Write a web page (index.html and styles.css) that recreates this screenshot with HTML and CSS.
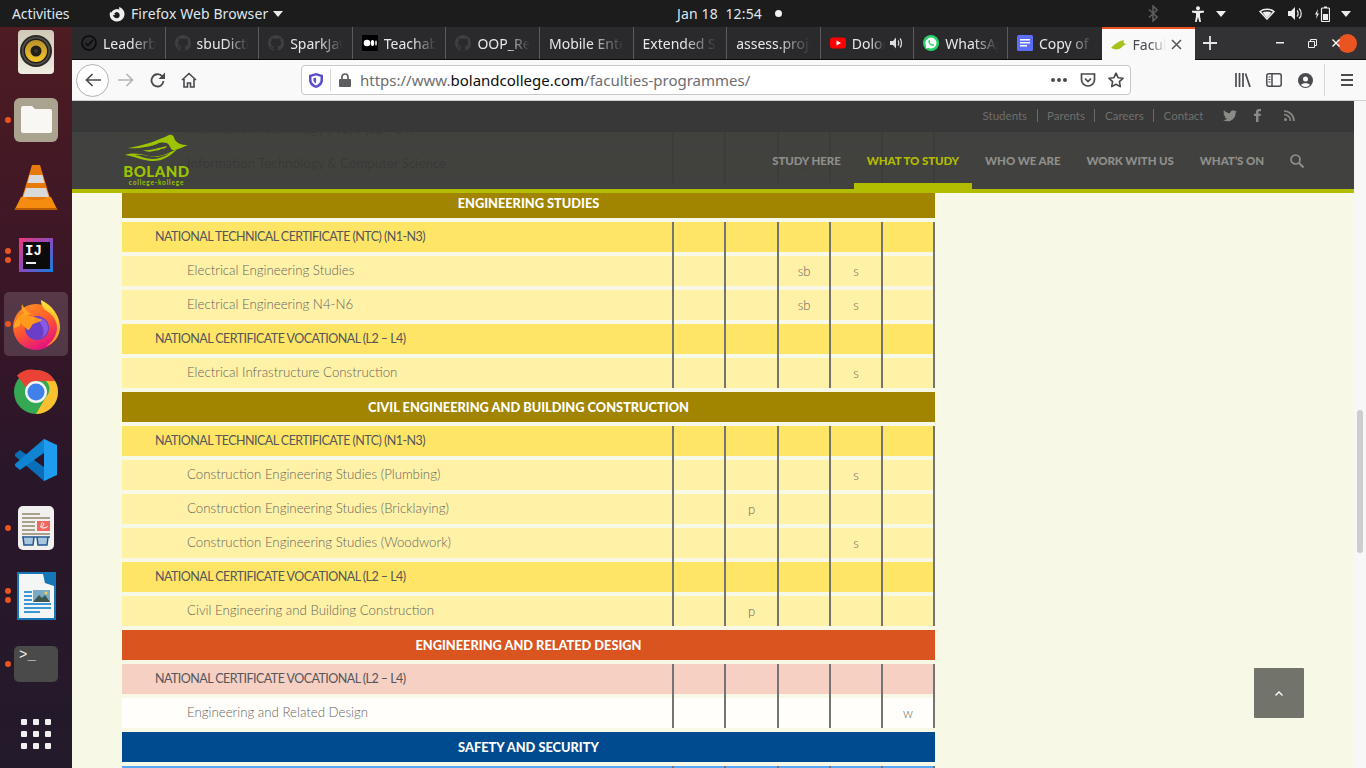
FILE: index.html
```html
<!DOCTYPE html>
<html lang="en">
<head>
<meta charset="utf-8">
<title>Faculties Programmes</title>
<link rel="stylesheet" href="styles.css">
</head>
<body>
<svg class="sprite" width="0" height="0"><defs>
<symbol id="gh" viewBox="0 0 16 16"><path fill="#3f3f42" d="M8 0C3.58 0 0 3.58 0 8c0 3.54 2.29 6.53 5.47 7.59.4.07.55-.17.55-.38 0-.19-.01-.82-.01-1.49-2.01.37-2.53-.49-2.69-.94-.09-.23-.48-.94-.82-1.13-.28-.15-.68-.52-.01-.53.63-.01 1.08.58 1.23.82.72 1.21 1.87.87 2.33.66.07-.52.28-.87.51-1.07-1.78-.2-3.64-.89-3.64-3.95 0-.87.31-1.59.82-2.15-.08-.2-.36-1.02.08-2.12 0 0 .67-.21 2.2.82.64-.18 1.32-.27 2-.27.68 0 1.36.09 2 .27 1.53-1.04 2.2-.82 2.2-.82.44 1.1.16 1.92.08 2.12.51.56.82 1.27.82 2.15 0 3.07-1.87 3.75-3.65 3.95.29.25.54.73.54 1.48 0 1.07-.01 1.93-.01 2.2 0 .21.15.46.55.38A8.013 8.013 0 0016 8c0-4.42-3.58-8-8-8z"/></symbol>
<symbol id="caret" viewBox="0 0 10 6"><path fill="currentColor" d="M0 0h10L5 6z"/></symbol>
</defs></svg>

<header class="topbar">
  <span class="tb-activities">Activities</span>
  <span class="tb-app">
    <svg width="16" height="16" viewBox="0 0 16 16"><path fill="#eee" d="M10.500 1C9.800 2.300 10 3 10.800 3.600 9.900 3.200 8.900 3 8 3 5 3.300 3 5 2.600 6.200 1.900 7 1.600 6 1.800 5.200.9 6.600.6 8 .8 9.500 1.300 13 4.300 15.500 8 15.500c4.100 0 7.500-3.300 7.500-7.500 0-3-1.800-5.600-5-7zM8 12.300C5.800 12.300 4.200 10.800 4 8.800c1 .5 1.600.3 2.300-.3-.7-.3-1.100-.8-1-1.300.8-.2 1.500-.6 2-1.100 1.800-.1 3.400 1.400 3.400 3.200 0 1.700-1.300 3-2.700 3z"/></svg>
    <span class="tb-appname">Firefox Web Browser</span>
    <svg class="tb-caret" width="10" height="6"><use href="#caret"/></svg>
  </span>
  <span class="tb-clock">Jan 18&nbsp; 12:54</span>
  <span class="tb-dot"></span>
  <span class="tb-status">
    <svg class="st-bt" width="10" height="17" viewBox="0 0 10 17"><path fill="none" stroke="#5c5c5c" stroke-width="1.600" d="M1 4.500l8 7.500-4 4V1l4 4-8 7.500"/></svg>
    <svg class="st-acc" width="14" height="16" viewBox="0 0 14 16"><circle cx="7" cy="2.200" r="2" fill="#eee"/><path fill="#eee" d="M1 4.800h12v1.600L9 7.200V10l1 6H8.300L7 11l-1.300 5H4l1-6V7.200L1 6.400z"/></svg>
    <svg class="st-caret1" width="10" height="6"><use href="#caret"/></svg>
    <svg class="st-wifi" width="16" height="12" viewBox="0 0 16 12"><path fill="none" stroke="#eee" stroke-width="1.500" d="M1 3.500C5 .5 11 .5 15 3.500L8 11z"/><path fill="#eee" d="M3.500 4.500c2.500-1.500 6.500-1.500 9 0L8 10z"/></svg>
    <svg class="st-vol" width="16" height="15" viewBox="0 0 16 15"><path fill="#eee" d="M0 5h3l4-4v13l-4-4H0z"/><path fill="none" stroke="#eee" stroke-width="1.200" d="M9 4.500c1.500 1.500 1.500 4.500 0 6M11 2.500c3 2.500 3 7.500 0 10"/></svg>
    <svg class="st-bat" width="15" height="16" viewBox="0 0 15 16"><path fill="#eee" d="M3 3L0 8.500h1.800L1 13l3-5.500H2.200z"/><rect x="6.500" y="2" width="8" height="13.500" rx="1" fill="none" stroke="#eee" stroke-width="1.200"/><rect x="9" y=".5" width="3" height="1.500" fill="#eee"/><rect x="8" y="8" width="5" height="6" fill="#eee"/></svg>
    <svg class="st-caret2" width="10" height="6"><use href="#caret"/></svg>
  </span>
</header>

<div class="desktop">
  <nav class="dock">
    <div class="dock-list">
      <div class="dock-item">
        <svg width="64" height="64" viewBox="0 0 64 64"><defs><linearGradient id="rb" x1="0" y1="0" x2="0" y2="1"><stop offset="0" stop-color="#cfc9b6"/><stop offset="1" stop-color="#f0ede2"/></linearGradient><linearGradient id="rbs" x1="0" y1="0" x2="0" y2="1"><stop offset="0" stop-color="#b8902a"/><stop offset="1" stop-color="#f4c62a"/></linearGradient></defs><rect x="14" y="10" width="36" height="44" rx="4" fill="url(#rb)"/><circle cx="32" cy="31" r="16" fill="#2b2a28"/><circle cx="32" cy="31" r="14" fill="#54524c"/><circle cx="32" cy="31" r="12.500" fill="#201e1a"/><circle cx="32" cy="31" r="11" fill="url(#rbs)"/><circle cx="32" cy="31" r="5.500" fill="#221f18"/><circle cx="32" cy="31" r="2" fill="#3a372e"/></svg>
      </div>
      <div class="dock-item">
        <span class="pip pip-one"></span>
        <svg width="64" height="64" viewBox="0 0 64 64"><rect x="10" y="10" width="44" height="44" rx="6" fill="#aaa38f"/><path fill="#f8f7f4" d="M17 20a2 2 0 012-2h9l3 3h15a2 2 0 012 2v20a2 2 0 01-2 2H19a2 2 0 01-2-2z"/></svg>
      </div>
      <div class="dock-item">
        <svg width="64" height="64" viewBox="0 0 64 64"><path fill="#e87a0c" d="M28 9h8l11 36H17z"/><path fill="#d9d9d9" d="M25.500 19h13l2 8h-17zM22 32h20l3 9H19z"/><path fill="#f58b0f" d="M17 41h5c-1 4 21 4 20 0h5l6 12H11z"/><path fill="#b95c05" d="M11 52h42l.5 2h-43z"/></svg>
      </div>
      <div class="dock-item">
        <span class="pip pip-two-a"></span><span class="pip pip-two-b"></span>
        <svg width="64" height="64" viewBox="0 0 64 64"><defs><linearGradient id="ij" x1="0" y1="0" x2="1" y2="1"><stop offset="0" stop-color="#f0397c"/><stop offset=".5" stop-color="#8b4bbd"/><stop offset="1" stop-color="#0f7ee0"/></linearGradient></defs><rect x="15" y="14" width="34" height="34" fill="url(#ij)"/><rect x="19" y="18" width="27" height="27" fill="#0b0b0b"/><text x="21" y="31" class="ij-text">IJ</text><rect x="22" y="38" width="10" height="2" fill="#eee"/></svg>
      </div>
      <div class="dock-item is-active">
        <span class="pip pip-one"></span>
        <svg width="64" height="64" viewBox="0 0 64 64"><defs><linearGradient id="ff" x1="0" y1="0" x2=".5" y2="1"><stop offset="0" stop-color="#ff9a1f"/><stop offset=".55" stop-color="#ff5a2c"/><stop offset="1" stop-color="#e6157d"/></linearGradient><linearGradient id="ffy" x1="0" y1="0" x2="0" y2="1"><stop offset="0" stop-color="#ffe23c"/><stop offset="1" stop-color="#ff8a1c"/></linearGradient></defs><circle cx="32" cy="35" r="23" fill="url(#ff)"/><path fill="url(#ffy)" d="M37 8c0 6 3 9 7 12 6 4 9 10 9 16s-4 14-11 18c8-2 14-10 14-19C56 24 48 13 37 8z"/><path fill="#ffa51f" d="M18 12c-1 4 0 7 2 9-6 3-10 9-10 15l6-2c0-7 6-12 12-12-4-1-8-5-10-10z"/><circle cx="33" cy="36" r="12" fill="#6b3ec9"/><path fill="#8a5ce6" d="M36 26c5 1 8 5 8 10 0 4-3 8-7 10 4-4 3-8 1-12-1-3-4-4-2-8z"/><path fill="#ff9a1f" d="M14 24c6-2 16 0 24 4-4 3-8 3-10 5-2 4-4 7-6 3-4-2-7-7-8-12z"/></svg>
      </div>
      <div class="dock-item">
        <svg width="64" height="64" viewBox="0 0 64 64"><circle cx="32" cy="32" r="22" fill="#34a853"/><path fill="#ea4335" d="M32 10a22 22 0 0119 11H32a11 11 0 00-10 6.500L13 15.500A22 22 0 0132 10z"/><path fill="#fbc02d" d="M51 21a22 22 0 01-19 33l10-17a11 11 0 000-16z"/><circle cx="32" cy="32" r="11" fill="#f4f4f4"/><circle cx="32" cy="32" r="8.500" fill="#3f80ea"/></svg>
      </div>
      <div class="dock-item">
        <svg width="64" height="64" viewBox="0 0 64 64"><path fill="#0a6fb8" d="M40 53l4-2v-9L16 22l-5 4v2z"/><path fill="#0f84d2" d="M40 11l4 2v9L16 42l-5-4v-2z"/><path fill="#1e9cf0" d="M40 11l13 6v30l-13 6z"/></svg>
      </div>
      <div class="dock-item">
        <span class="pip pip-one"></span>
        <svg width="64" height="64" viewBox="0 0 64 64"><rect x="14" y="10" width="36" height="44" rx="5" fill="#f1f0ee"/><path fill="#a8a08a" d="M18 17h18v2H18zM18 21h28v2H18zM18 25h13v2H18zM18 29h13v2H18zM18 33h13v2H18zM18 37h28v2H18z"/><rect x="33" y="25" width="13" height="10" fill="#f2665d"/><path fill="none" stroke="#fff" stroke-width="1" d="M36 31c3 0 5-3 3-4s-3 5 0 5 4-1 5-2"/><path fill="#a9c6e0" d="M19 42h11l-1 7h-9zM33 42h11l-1 7h-9z"/><path fill="none" stroke="#1f568e" stroke-width="1.500" d="M18 41h28M19 41l1 8h9l1-8M33 41l1 8h9l1-8"/></svg>
      </div>
      <div class="dock-item">
        <span class="pip pip-two-a"></span><span class="pip pip-two-b"></span>
        <svg width="64" height="64" viewBox="0 0 64 64"><path fill="#1478b8" d="M13 8h26l13 13v35H13z"/><path fill="#f4f5f5" d="M15 10h24l2 9 9 3v32H15z"/><path fill="#1478b8" d="M37 8h15v15z"/><path fill="#3a98d4" d="M20 27h8v2h-8zM20 31h8v2h-8zM20 35h8v2h-8zM20 39h27v2H20zM20 43h27v2H20zM20 47h16v2H20z"/><rect x="29" y="26" width="17" height="12" fill="#7aa9c4"/><path fill="#3d5750" d="M29 38l6-7 3 3 3-3 5 7z"/><circle cx="42" cy="29" r="1.500" fill="#f3d25a"/></svg>
      </div>
      <div class="dock-item">
        <span class="pip pip-one"></span>
        <svg width="64" height="64" viewBox="0 0 64 64"><rect x="10" y="14" width="44" height="36" rx="5" fill="#4a4a4a"/><text x="15" y="27" class="term-text">&gt;_</text></svg>
      </div>
    </div>
    <div class="dock-grid">
      <span></span><span></span><span></span><span></span><span></span><span></span><span></span><span></span><span></span>
    </div>
  </nav>

  <div class="browser">
    <div class="tabstrip">
      <div class="tab"><svg width="16" height="16" viewBox="0 0 16 16"><circle cx="8" cy="8" r="7" fill="none" stroke="#0a0a0a" stroke-width="1.600"/><path fill="none" stroke="#0a0a0a" stroke-width="1.400" d="M4.500 8l2.500 2.500L12 5"/></svg><span class="tab-label">Leaderboard</span></div>
      <div class="tab"><svg width="16" height="16"><use href="#gh"/></svg><span class="tab-label">sbuDictionary</span></div>
      <div class="tab"><svg width="16" height="16"><use href="#gh"/></svg><span class="tab-label">SparkJava</span></div>
      <div class="tab"><svg width="16" height="16" viewBox="0 0 16 16"><rect width="16" height="16" fill="#000"/><circle cx="5" cy="8" r="3.300" fill="#fff"/><ellipse cx="10.500" cy="8" rx="1.700" ry="3" fill="#fff"/><ellipse cx="14" cy="8" rx=".8" ry="2.700" fill="#fff"/></svg><span class="tab-label">Teachable</span></div>
      <div class="tab"><svg width="16" height="16"><use href="#gh"/></svg><span class="tab-label">OOP_Repository</span></div>
      <div class="tab"><span class="tab-label">Mobile Enterprise</span></div>
      <div class="tab"><span class="tab-label">Extended Study</span></div>
      <div class="tab"><span class="tab-label">assess.project</span></div>
      <div class="tab tab-sound"><svg width="16" height="16" viewBox="0 0 16 16"><rect y="2.500" width="16" height="11" rx="3" fill="#f00"/><path fill="#fff" d="M6.500 5.500L11 8l-4.500 2.500z"/></svg><span class="tab-label">Dolores</span><svg class="tab-audio" width="14" height="12" viewBox="0 0 14 12"><path fill="#ddd" d="M0 4h3l3-3.500v11L3 8H0z"/><path fill="none" stroke="#ddd" stroke-width="1.200" d="M8 3.500c1 1 1 4 0 5M10 1.500c2 2 2 7 0 9"/></svg></div>
      <div class="tab"><svg width="16" height="16" viewBox="0 0 16 16"><circle cx="8" cy="8" r="8" fill="#25d366"/><path fill="#fff" d="M8 2.500A5.500 5.500 0 003.300 11L2.500 13.500l2.600-.8A5.500 5.500 0 108 2.500z"/><path fill="#25d366" d="M6 5c-1 .7-1 2 0 3.500S9 11 10.200 10.800c.8-.3 1.100-1 .8-1.300L9.700 8.800l-.7.700C8 9.200 7 8.200 6.600 7.300l.6-.7L6.600 5z"/></svg><span class="tab-label">WhatsApp</span></div>
      <div class="tab"><svg width="16" height="16" viewBox="0 0 16 16"><rect width="16" height="16" rx="1.500" fill="#5c6ef8"/><path fill="#fff" d="M3 4h10v1.500H3zM3 7h10v1.500H3zM3 10h7v1.500H3z"/></svg><span class="tab-label">Copy of</span></div>
      <div class="tab tab-active"><svg width="16" height="10" viewBox="0 0 16 10"><path fill="#a6c21a" d="M0 8c3-4 8-7 13-8-1 3 0 4 3 4-4 1-5 4-8 5-3 1-5 0-8-1z"/></svg><span class="tab-label">Faculties</span><svg class="tab-close" width="11" height="11" viewBox="0 0 11 11"><path fill="none" stroke="#555" stroke-width="1.500" d="M1 1l9 9M10 1l-9 9"/></svg></div>
      <svg class="newtab" width="14" height="14" viewBox="0 0 14 14"><path fill="none" stroke="#e6e6e6" stroke-width="1.800" d="M7 0v14M0 7h14"/></svg>
      <div class="winctl">
        <svg width="8" height="2" viewBox="0 0 8 2"><rect width="8" height="1.500" fill="#eee"/></svg>
        <svg width="9" height="9" viewBox="0 0 9 9"><path fill="none" stroke="#eee" stroke-width="1" d="M.5 2.500h6v6h-6zM2.500 2.500v-2h6v6h-2"/></svg>
        <span class="win-close"><svg width="8" height="8" viewBox="0 0 8 8"><path fill="none" stroke="#fff" stroke-width="1.400" d="M.5.500l7 7M7.500.500l-7 7"/></svg></span>
      </div>
    </div>

    <div class="navbar">
      <span class="nav-back"><svg width="16" height="14" viewBox="0 0 16 14"><path fill="none" stroke="#4a4a4f" stroke-width="1.700" d="M16 7H1.500M7.500 1l-6 6 6 6"/></svg></span>
      <svg class="nav-forward" width="16" height="14" viewBox="0 0 16 14"><path fill="none" stroke="#b4b4b6" stroke-width="1.700" d="M0 7h14.500M8.500 1l6 6-6 6"/></svg>
      <svg class="nav-reload" width="16" height="16" viewBox="0 0 16 16"><path fill="none" stroke="#4a4a4f" stroke-width="1.800" d="M13.500 9A6 6 0 112.300 5.500a6 6 0 0110.200-.8"/><path fill="#4a4a4f" d="M15 .5V7H8.500z"/></svg>
      <svg class="nav-home" width="16" height="16" viewBox="0 0 16 16"><path fill="none" stroke="#4a4a4f" stroke-width="1.600" d="M1 8l7-6.500L15 8M3 7v8h3.500v-4h3v4H13V7"/></svg>
      <div class="urlbar">
        <svg class="url-shield" width="14" height="15" viewBox="0 0 14 15"><path fill="#5a4fcf" d="M7 0l7 2v5c0 4-3 7-7 8-4-1-7-4-7-8V2z"/><path fill="#fff" d="M7 2.500l4.500 1.200V7c0 2.500-2 4.500-4.500 5.500C4.500 11.500 2.500 9.500 2.500 7V3.700z"/><path fill="#5a4fcf" d="M7 4.500v6C5.500 9.700 4.400 8.500 4.400 7V5.200z"/></svg>
        <span class="url-sep"></span>
        <svg class="url-lock" width="12" height="14" viewBox="0 0 12 14"><path fill="#5e5e62" d="M1 6h10a1 1 0 011 1v6a1 1 0 01-1 1H1a1 1 0 01-1-1V7a1 1 0 011-1z"/><path fill="none" stroke="#5e5e62" stroke-width="1.700" d="M3 6.500V4a3 3 0 016 0v2.500"/></svg>
        <span class="url-text">https://www.<b class="url-host">bolandcollege.com</b>/faculties-programmes/</span>
        <span class="url-dots"><i></i><i></i><i></i></span>
        <svg class="url-pocket" width="16" height="14" viewBox="0 0 16 14"><path fill="none" stroke="#4a4a4f" stroke-width="1.700" d="M1.500 1h13v5.500a6.500 6.500 0 01-13 0z"/><path fill="none" stroke="#4a4a4f" stroke-width="1.700" d="M5 5.500l3 3 3-3"/></svg>
        <svg class="url-star" width="16" height="16" viewBox="0 0 16 16"><path fill="none" stroke="#4a4a4f" stroke-width="1.600" stroke-linejoin="round" d="M8 1.200l2.100 4.500 4.900.6-3.600 3.400.9 4.900L8 12.200l-4.300 2.400.9-4.900L1 6.300l4.900-.6z"/></svg>
      </div>
      <div class="nav-tools">
        <svg width="16" height="14" viewBox="0 0 16 14"><path fill="none" stroke="#4a4a4f" stroke-width="1.700" d="M1 0v14M4.500 0v14M8 0v14M10.500 .5L15 14"/></svg>
        <svg width="16" height="14" viewBox="0 0 16 14"><rect x=".8" y=".8" width="14.400" height="12.400" rx="2" fill="none" stroke="#4a4a4f" stroke-width="1.500"/><path stroke="#4a4a4f" stroke-width="1.500" d="M6 1v12"/><path stroke="#4a4a4f" d="M2.500 4h2M2.500 6.500h2M2.500 9h2"/></svg>
        <svg width="15" height="15" viewBox="0 0 15 15"><circle cx="7.500" cy="7.500" r="7.500" fill="#4a4a4f"/><circle cx="7.500" cy="6" r="2.500" fill="#f9f9fa"/><path fill="#f9f9fa" d="M3 12c1-2.500 8-2.500 9 0a6 6 0 01-9 0z"/></svg>
        <span class="tool-sep"></span>
        <svg width="14" height="12" viewBox="0 0 14 12"><path stroke="#4a4a4f" stroke-width="1.800" d="M1 1h12M1 6h12M1 11h12"/></svg>
      </div>
    </div>

    <div class="viewport">
      <main class="page">
        <div class="table">
          <div class="group group-ghost">
            <div class="row row-ghost"><div class="name">Information Technology (NC)V (L2 - L4)</div><div class="c"></div><div class="c c2"></div><div class="c"></div><div class="c"></div><div class="c cz"></div></div>
            <div class="row row-ghost"><div class="name">Information Technology &amp; Computer Science</div><div class="c"></div><div class="c c2"></div><div class="c">sb</div><div class="c"></div><div class="c cz"></div></div>
          </div>

          <div class="band band-gold">ENGINEERING STUDIES</div>
          <div class="group">
            <div class="row row-head"><div class="name">NATIONAL TECHNICAL CERTIFICATE (NTC) (N1-N3)</div><div class="c"></div><div class="c c2"></div><div class="c"></div><div class="c"></div><div class="c cz"></div></div>
            <div class="row row-sub"><div class="name">Electrical Engineering Studies</div><div class="c"></div><div class="c c2"></div><div class="c">sb</div><div class="c">s</div><div class="c cz"></div></div>
            <div class="row row-sub"><div class="name">Electrical Engineering N4-N6</div><div class="c"></div><div class="c c2"></div><div class="c">sb</div><div class="c">s</div><div class="c cz"></div></div>
            <div class="row row-head"><div class="name">NATIONAL CERTIFICATE VOCATIONAL (L2 – L4)</div><div class="c"></div><div class="c c2"></div><div class="c"></div><div class="c"></div><div class="c cz"></div></div>
            <div class="row row-sub"><div class="name">Electrical Infrastructure Construction</div><div class="c"></div><div class="c c2"></div><div class="c"></div><div class="c">s</div><div class="c cz"></div></div>
          </div>

          <div class="band band-gold">CIVIL ENGINEERING AND BUILDING CONSTRUCTION</div>
          <div class="group">
            <div class="row row-head"><div class="name">NATIONAL TECHNICAL CERTIFICATE (NTC) (N1-N3)</div><div class="c"></div><div class="c c2"></div><div class="c"></div><div class="c"></div><div class="c cz"></div></div>
            <div class="row row-sub"><div class="name">Construction Engineering Studies (Plumbing)</div><div class="c"></div><div class="c c2"></div><div class="c"></div><div class="c">s</div><div class="c cz"></div></div>
            <div class="row row-sub"><div class="name">Construction Engineering Studies (Bricklaying)</div><div class="c"></div><div class="c c2">p</div><div class="c"></div><div class="c"></div><div class="c cz"></div></div>
            <div class="row row-sub"><div class="name">Construction Engineering Studies (Woodwork)</div><div class="c"></div><div class="c c2"></div><div class="c"></div><div class="c">s</div><div class="c cz"></div></div>
            <div class="row row-head"><div class="name">NATIONAL CERTIFICATE VOCATIONAL (L2 – L4)</div><div class="c"></div><div class="c c2"></div><div class="c"></div><div class="c"></div><div class="c cz"></div></div>
            <div class="row row-sub"><div class="name">Civil Engineering and Building Construction</div><div class="c"></div><div class="c c2">p</div><div class="c"></div><div class="c"></div><div class="c cz"></div></div>
          </div>

          <div class="band band-orange">ENGINEERING AND RELATED DESIGN</div>
          <div class="group">
            <div class="row row-pink"><div class="name">NATIONAL CERTIFICATE VOCATIONAL (L2 – L4)</div><div class="c"></div><div class="c c2"></div><div class="c"></div><div class="c"></div><div class="c cz"></div></div>
            <div class="row row-white"><div class="name">Engineering and Related Design</div><div class="c"></div><div class="c c2"></div><div class="c"></div><div class="c"></div><div class="c cz">w</div></div>
          </div>

          <div class="band band-blue">SAFETY AND SECURITY</div>
          <div class="group">
            <div class="row row-sky"><div class="name"></div><div class="c"></div><div class="c c2"></div><div class="c"></div><div class="c"></div><div class="c cz"></div></div>
          </div>
        </div>

        <header class="site-head">
          <div class="site-top">
            <a class="toplink">Students</a><a class="toplink">Parents</a><a class="toplink">Careers</a><a class="toplink toplink-last">Contact</a>
            <svg class="soc soc-tw" width="14" height="12" viewBox="0 0 14 12"><path fill="#8a8a87" d="M14 1.500c-.5.200-1 .400-1.700.500.600-.4 1-1 1.300-1.600-.6.300-1.200.6-1.800.7A2.900 2.900 0 007 3.300C4.600 3.200 2.500 2 1 .3.200 1.700.600 3.300 1.900 4.200c-.5 0-1-.1-1.300-.4 0 1.400 1 2.600 2.300 2.900-.4.100-.9.100-1.300 0 .4 1.200 1.500 2 2.700 2A5.800 5.800 0 010 10c5.500 3.500 13-.1 12.600-7.500.6-.3 1-.6 1.400-1z"/></svg>
            <svg class="soc soc-fb" width="7" height="13" viewBox="0 0 7 13"><path fill="#8a8a87" d="M2 13V7H0V4.700h2V3C2 1 3.200 0 5 0h2v2.200H5.700C4.800 2.200 4.500 2.600 4.500 3.300v1.400H7L6.600 7H4.500v6z"/></svg>
            <svg class="soc soc-rss" width="11" height="11" viewBox="0 0 11 11"><circle cx="1.500" cy="9.500" r="1.500" fill="#8a8a87"/><path fill="none" stroke="#8a8a87" stroke-width="1.600" d="M0 4.500A6.500 6.500 0 016.500 11M0 1a10 10 0 0110 10"/></svg>
          </div>
          <div class="site-main">
            <div class="logo">
              <svg width="63" height="29" viewBox="0 0 63 29"><path fill="#9cc400" d="M3 14C18 12 34 6 44 1c4-1.500 5 2 6 5 2 3 6 5 13 5-5 2-9 4-13 5-4 1-4-2-6-5-2-3-8-3-12-1-8 3-20 5-29 4z"/><path fill="#9cc400" d="M18 16c8 1 14-2 24-4-1 2-1 2-6 3-2 2-5 1-7 2-4 1-8 1-11-1z"/><path fill="#9cc400" d="M0 21c8-3 16-1 24 1 10 2 20-3 28-7-6 7-16 13-26 12C16 26 8 22 0 21z"/><path fill="#434441" d="M10 21c8-1 14 2 22 2 6-1 10-3 13-4-6 4-12 6-18 6-6 0-11-3-17-4z"/></svg>
              <span class="logo-name">BOLAND</span>
              <span class="logo-sub">college-kollege</span>
            </div>
            <nav class="menu">
              <a class="menu-item">STUDY HERE</a>
              <a class="menu-item is-current">WHAT TO STUDY</a>
              <a class="menu-item">WHO WE ARE</a>
              <a class="menu-item">WORK WITH US</a>
              <a class="menu-item">WHAT’S ON</a>
              <svg class="menu-search" width="14" height="14" viewBox="0 0 14 14"><circle cx="5.500" cy="5.500" r="4.500" fill="none" stroke="#8f8f8b" stroke-width="1.700"/><path stroke="#8f8f8b" stroke-width="2" d="M9 9l4.500 4.500"/></svg>
            </nav>
          </div>
        </header>

        <a class="to-top"><svg width="8" height="5" viewBox="0 0 8 5"><path fill="none" stroke="#fff" stroke-width="1.300" d="M.5 4.500L4 1l3.500 3.500"/></svg></a>
      </main>
      <aside class="scrolltrack"><span class="scrollthumb"></span></aside>
    </div>
  </div>
</div>
</body>
</html>
```
FILE: styles.css
```css
* { box-sizing: border-box; }
html, body { margin: 0; height: 100%; overflow: hidden; }
body { width: 1366px; height: 768px; font-family: "Lato", "Noto Sans", sans-serif; background: #1b1b1b; display: flex; flex-direction: column; }
.sprite { position: absolute; }
svg { display: block; flex: none; }

/* GNOME top bar */
.topbar { height: 27px; flex: none; background: #1c1c1c; color: #eaeaea; font-family: "Noto Sans", sans-serif; font-size: 14px; display: flex; align-items: center; padding-left: 12px; }
.tb-activities { width: 97px; flex: none; color: #dfe7ee; letter-spacing: -.1px; }
.tb-app { display: flex; align-items: center; width: 568px; flex: none; }
.tb-appname { margin-left: 6px; color: #dfe7ee; letter-spacing: .1px; }
.tb-caret { margin-left: 5px; color: #eee; }
.tb-clock { width: 98px; flex: none; color: #dfe7ee; font-size: 14px; letter-spacing: .15px; }
.tb-dot { width: 7px; height: 7px; border-radius: 50%; background: #f2f2f2; flex: none; }
.tb-status { margin-left: auto; display: flex; align-items: center; padding-right: 15px; color: #eee; }
.st-acc { margin-left: 33px; }
.st-caret1 { margin-left: 11px; }
.st-wifi { margin-left: 33px; }
.st-vol { margin-left: 13px; }
.st-bat { margin-left: 11px; }
.st-caret2 { margin-left: 11px; }

.desktop { flex: 1; display: flex; min-height: 0; }

/* Dock */
.dock { width: 72px; flex: none; background: linear-gradient(180deg, #4e1c22 0, #3a1627 35%, #2a1629 60%, #231a2b 100%); display: flex; flex-direction: column; align-items: center; overflow: hidden; }
.dock-list { display: flex; flex-direction: column; gap: 4px; margin-top: -7px; }
.dock-item { width: 64px; height: 64px; border-radius: 5px; position: relative; }
.dock-item.is-active { background: rgba(255,255,255,.15); }
.pip { position: absolute; left: 1px; width: 6px; height: 6px; border-radius: 50%; background: #e9541f; }
.pip-one { top: 29px; }
.pip-two-a { top: 24px; }
.pip-two-b { top: 33px; }
.ij-text { font-family: "Liberation Mono", monospace; font-weight: 700; font-size: 14px; fill: #fff; }
.term-text { font-family: "Liberation Mono", monospace; font-size: 14px; fill: #f0f0f0; }
.dock-grid { margin-top: 23px; display: grid; grid-template-columns: repeat(3, 6px); gap: 6px; }
.dock-grid span { width: 6px; height: 6px; border-radius: 1px; background: #efefef; }

/* Browser chrome */
.browser { flex: 1; min-width: 0; display: flex; flex-direction: column; }
.tabstrip { height: 33px; flex: none; background: #323234; display: flex; align-items: stretch; border-bottom: 1px solid #0c0c0d; }
.tab { width: 93.600px; flex: none; background: #2a2a2d; display: flex; align-items: center; padding: 0 9px; border-right: 1px solid #5b5b5e; color: #e8e8e8; font-family: "Noto Sans", sans-serif; font-size: 14px; overflow: hidden; }
.tab > svg { margin-right: 6px; }
.tab-label { flex: 1; min-width: 0; white-space: nowrap; overflow: hidden; -webkit-mask-image: linear-gradient(90deg, #000 55%, transparent 100%); mask-image: linear-gradient(90deg, #000 55%, transparent 100%); }
.tab-sound { padding-right: 0; }
.tab > .tab-audio { margin: 0 9px 0 5px; }
.tab:nth-child(11) { border-right: 0; }
.tab-active { background: #f9f9fa; color: #4a4a4f; border-right: 0; border-top: 2px solid #e95420; height: 33px; padding-right: 0; }
.tab-active > .tab-close { margin: 0 13px 0 5px; }
.newtab { align-self: center; margin-left: 8px; }
.winctl { margin-left: auto; display: flex; align-items: center; padding-right: 9px; }
.winctl svg:nth-child(1) { margin-right: 24px; }
.winctl svg:nth-child(2) { margin-right: 21px; }
.win-close { width: 19px; height: 19px; border-radius: 50%; background: #e95420; display: flex; align-items: center; justify-content: center; }

.navbar { height: 41px; flex: none; background: #f9f9fa; border-bottom: 1px solid #cfcfd0; display: flex; align-items: center; padding-left: 4px; }
.nav-back { width: 33px; height: 33px; border-radius: 50%; border: 1px solid #b1b1b3; background: #fff; display: flex; align-items: center; justify-content: center; flex: none; }
.nav-forward { margin-left: 9px; }
.nav-reload { margin-left: 16px; }
.nav-home { margin-left: 15px; }
.urlbar { width: 830px; height: 30px; margin-left: 104px; background: #fff; border: 1px solid #c8c8ca; border-radius: 4px; display: flex; align-items: center; padding-left: 7px; flex: none; }
.url-sep { width: 1px; height: 22px; background: #d7d7db; margin-left: 7px; }
.url-lock { margin-left: 8px; }
.url-text { margin-left: 9px; font-family: "Noto Sans", sans-serif; font-size: 15px; color: #6d6d72; white-space: nowrap; }
.url-host { font-weight: 400; color: #0c0c0d; }
.url-dots { margin-left: auto; display: flex; gap: 2px; }
.url-dots i { width: 4px; height: 4px; border-radius: 50%; background: #4a4a4f; }
.url-pocket { margin-left: 13px; }
.url-star { margin: 0 6px 0 12px; }
.nav-tools { margin-left: 104px; display: flex; align-items: center; }
.nav-tools svg:nth-child(2) { margin-left: 15px; }
.nav-tools svg:nth-child(3) { margin-left: 16px; }
.tool-sep { width: 1px; height: 32px; background: #d7d7db; margin: 0 15px 0 11px; }

/* Page */
.viewport { flex: 1; min-height: 0; display: flex; }
.page { flex: 1; min-width: 0; position: relative; overflow: hidden; background: #f7f8e6; padding: 14px 0 0 50px; }
.table { width: 813px; }
.band { height: 30px; margin-bottom: 4px; text-align: center; line-height: 31px; color: #fff; font-weight: 900; font-size: 12.800px; }
.band-gold { background: #a18500; }
.band-orange { background: #d9541e; }
.band-blue { background: #004a8f; }
.group { margin-bottom: 4px; }
.group-ghost { margin-bottom: 5px; }
.row { display: grid; grid-template-columns: 550px 52px 53px 52px 52px 54px; height: 34px; font-size: 13.250px; color: #807e74; }
.row > * { height: 34px; padding-bottom: 4px; background-clip: content-box; }
.group .row:last-child { height: 30px; }
.group .row:last-child > * { height: 30px; padding-bottom: 0; }
.group-ghost .row:last-child { height: 34px; }
.group-ghost .row:last-child > * { height: 34px; padding-bottom: 4px; }
.name { line-height: 29px; text-indent: 65px; white-space: nowrap; font-weight: 300; color: #67665f; }
.c { border-left: 2px solid #747472; display: flex; align-items: center; justify-content: center; font-size: 13px; font-weight: 300; color: #67665f; }
.cz { border-right: 2px solid #747472; }
.row-head .name, .row-pink .name { text-indent: 33px; color: #55565c; font-size: 12.500px; font-weight: 400; letter-spacing: -.55px; }
.row-head > * { background-color: #ffe566; }
.row-sub > * { background-color: #fff1a6; }
.row-ghost > * { background-color: #fff1a6; }
.row-ghost .name { color: #111; font-weight: 400; }
.row-pink > * { background-color: #f6d0c2; }
.row-white > * { background-color: #fffefb; }
.row-sky > * { background-color: #57a8f5; }

/* Site header overlaid on the scrolled table */
.site-head { position: absolute; left: 0; right: 0; top: 0; }
.site-top { height: 31px; background: #383838; display: flex; align-items: center; justify-content: flex-end; padding: 0 59px 2px 0; }
.toplink { font-size: 11.500px; color: #6f6f6c; padding: 0 9.500px; border-right: 1px solid #6a6a67; line-height: 13px; }
.toplink-last { border-right: 0; padding-right: 10.500px; }
.soc-tw { margin-left: 9px; }
.soc-fb { margin-left: 17px; }
.soc-rss { margin-left: 23px; }
.site-main { height: 61px; background: rgba(58,59,57,.965); border-bottom: 4px solid #b2bd00; display: flex; padding: 0 50px 0 53px; }
.logo { width: 63px; margin-top: 2px; display: flex; flex-direction: column; align-items: center; color: #9cc400; }
.logo-name { font-weight: 900; font-size: 15px; line-height: 13px; letter-spacing: .5px; margin-top: 2px; }
.logo-sub { font-size: 6.500px; line-height: 10px; letter-spacing: .8px; font-weight: 700; white-space: nowrap; }
.menu { margin-left: auto; display: flex; align-items: stretch; }
.menu-item { padding: 0 13px; font-weight: 900; font-size: 11.500px; letter-spacing: -.1px; color: #8f8f8b; line-height: 57px; border-bottom: 6px solid transparent; height: 57px; white-space: nowrap; }
.menu-item.is-current { color: #b2bd00; border-bottom-color: #b2bd00; }
.menu-search { align-self: center; margin-left: 13px; }
.to-top { position: absolute; left: 1182px; top: 567px; width: 50px; height: 50px; background: #72736b; border-radius: 1px; display: flex; align-items: center; justify-content: center; }
.scrolltrack { width: 12px; flex: none; background: #f7f7f7; padding: 309px 3px 0; }
.scrollthumb { display: block; width: 6px; height: 143px; border-radius: 3px; background: #cdcdcd; }
```
